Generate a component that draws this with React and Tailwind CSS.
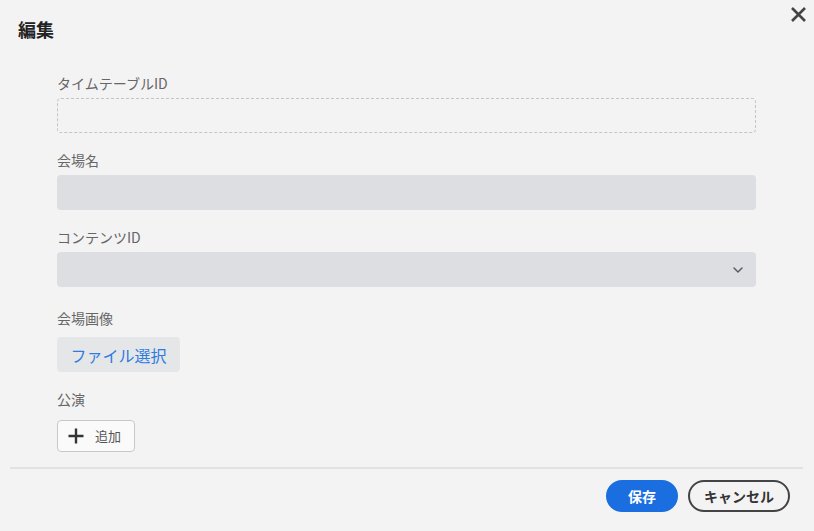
import { ChevronDown } from 'lucide-react';

const font = { fontFamily: '"Noto Sans CJK JP", "Noto Sans", sans-serif' };

function Label({ children, className = 'mb-[5px]' }) {
  return <p className={`text-[14px] leading-[20px] text-[#666] ${className}`}>{children}</p>;
}

export default function App() {
  return (
    <div className="w-[814px] h-[531px] bg-[#f3f3f3] flex flex-col" style={font}>
      <div className="flex justify-between items-start pl-[18px] pr-[7px]">
        <h1 className="pt-[16px] text-[18px] leading-[26px] font-bold text-[#222]">編集</h1>
        <button className="pt-[6px]" aria-label="閉じる">
          <svg width="17" height="17" viewBox="0 0 17 17" fill="none">
            <path d="M2 2 L15 15 M15 2 L2 15" stroke="#444" strokeWidth="2.6" />
          </svg>
        </button>
      </div>

      <div className="pl-[57px] pr-[58px] pt-[31px] flex flex-col">
        <Label>タイムテーブルID</Label>
        <div className="h-[35px] rounded-[4px] border border-dashed border-[#c4c4cc] mb-[17px]" />

        <Label>会場名</Label>
        <div className="h-[35px] rounded-[4px] bg-[#dddee2] mb-[17px]" />

        <Label>コンテンツID</Label>
        <div className="h-[35px] rounded-[4px] bg-[#dddee2] mb-[21px] flex items-center justify-end pr-[10px]">
          <ChevronDown size={16} strokeWidth={2.2} className="text-[#555c66]" />
        </div>

        <Label className="mb-[9px]">会場画像</Label>
        <div className="mb-[17px] flex">
          <button className="h-[35px] w-[123px] rounded-[4px] bg-[#e5e6e8] text-[16px] text-[#2f7ce0]">
            ファイル選択
          </button>
        </div>

        <Label className="mb-[11px]">公演</Label>
        <div className="flex">
          <button className="h-[32px] w-[78px] rounded-[4px] bg-[#fafafa] border border-[#c8c8c8] flex items-center pl-[9px] gap-[10px]">
            <svg width="18" height="18" viewBox="0 0 18 18" fill="none">
              <path d="M9 1.5 V16.5 M1.5 9 H16.5" stroke="#333" strokeWidth="2.4" />
            </svg>
            <span className="text-[13px] text-[#555]">追加</span>
          </button>
        </div>
      </div>

      <div className="mt-[15px] ml-[10px] mr-[11px] h-[2px] bg-[#e2e2e2]" />

      <div className="flex justify-end gap-[10px] pr-[24px] pt-[11px]">
        <button className="h-[32px] w-[72px] rounded-full bg-[#1a6ee0] text-white text-[14px] font-bold">
          保存
        </button>
        <button className="h-[32px] w-[102px] rounded-full border-2 border-[#444] text-[#333] text-[14px] font-bold">
          キャンセル
        </button>
      </div>
    </div>
  );
}
